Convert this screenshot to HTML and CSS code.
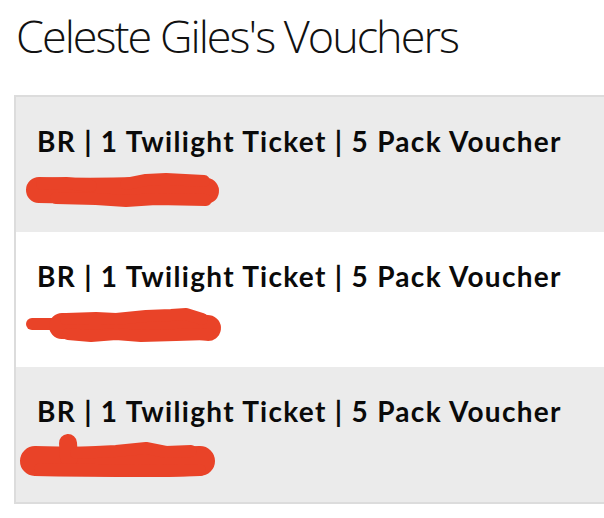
FILE: index.html
```html
<!DOCTYPE html>
<html>
<head>
<meta charset="utf-8">
<link rel="stylesheet" href="styles.css">
</head>
<body>
<h1 class="title">Celeste Giles's Vouchers</h1>
<ul class="vouchers">
  <li class="voucher">
    <div class="name">BR | 1 Twilight Ticket | 5 Pack Voucher</div>
    <svg class="redact" width="220" height="50" viewBox="0 0 220 50">
      <path class="body" d="M23 28 C60 29 90 29 120 28 C150 27 175 27 190 29" />
      <path class="bump" d="M26 22 L50 21 L75 24 M110 22 L130 18 L150 17 L188 19 M40 36 L80 37 L110 39 L140 37 L190 38" />
    </svg>
  </li>
  <li class="voucher">
    <div class="name">BR | 1 Twilight Ticket | 5 Pack Voucher</div>
    <svg class="redact" width="220" height="50" viewBox="0 0 220 50">
      <path class="tail" d="M16 27 L44 27" />
      <path class="body" d="M46 29 C80 30 120 30 160 29 C175 29 185 30 192 31" />
      <path class="bump" d="M50 22 L80 21 L100 22 L130 19 L155 18 L170 17 L186 22 M52 37 L75 39 L100 37 L125 39 L160 38 L192 37" />
    </svg>
  </li>
  <li class="voucher">
    <div class="name">BR | 1 Twilight Ticket | 5 Pack Voucher</div>
    <svg class="redact" width="220" height="50" viewBox="0 0 220 50">
      <path class="body big" d="M19 29 C60 30 100 30 140 30 C160 30 172 29 184 29" />
      <path class="lump" d="M52 11 L53 26" />
      <path class="bump" d="M60 21 L100 19 L130 16 L150 20 L175 19 M24 37 L80 38 L120 39 L184 38" />
    </svg>
  </li>
</ul>
</body>
</html>
```
FILE: styles.css
```css
html, body {
  margin: 0;
  padding: 0;
  background: #ffffff;
}
body {
  width: 604px;
  overflow: hidden;
}
.title {
  margin: 0;
  padding: 10px 0 0 16px;
  height: 81px;
  box-sizing: border-box;
  font-family: "Open Sans", "Liberation Sans", sans-serif;
  font-weight: 300;
  font-size: 45px;
  line-height: 52px;
  letter-spacing: -2px;
  color: #111111;
  white-space: nowrap;
}
.vouchers {
  list-style: none;
  margin: 14px 0 0 14px;
  padding: 0;
  width: 620px;
  border: 2px solid #dcdcdc;
}
.voucher {
  height: 135px;
  box-sizing: border-box;
  padding: 27px 0 0 21px;
  background: #ebebeb;
}
.voucher:nth-child(2) {
  background: #ffffff;
}
.name {
  font-family: "Lato", "Liberation Sans", sans-serif;
  font-weight: 700;
  font-size: 28px;
  line-height: 34px;
  letter-spacing: 1.3px;
  color: #0a0a0a;
  white-space: nowrap;
}
.redact {
  display: block;
  margin: 4px 0 0 -21px;
}
.redact path {
  fill: none;
  stroke: #e94328;
  stroke-linecap: round;
  stroke-linejoin: round;
}
.redact .body {
  stroke-width: 26;
}
.redact .big {
  stroke-width: 30;
}
.redact .bump {
  stroke-width: 12;
}
.redact .tail {
  stroke-width: 12;
}
.redact .lump {
  stroke-width: 18;
}
```
